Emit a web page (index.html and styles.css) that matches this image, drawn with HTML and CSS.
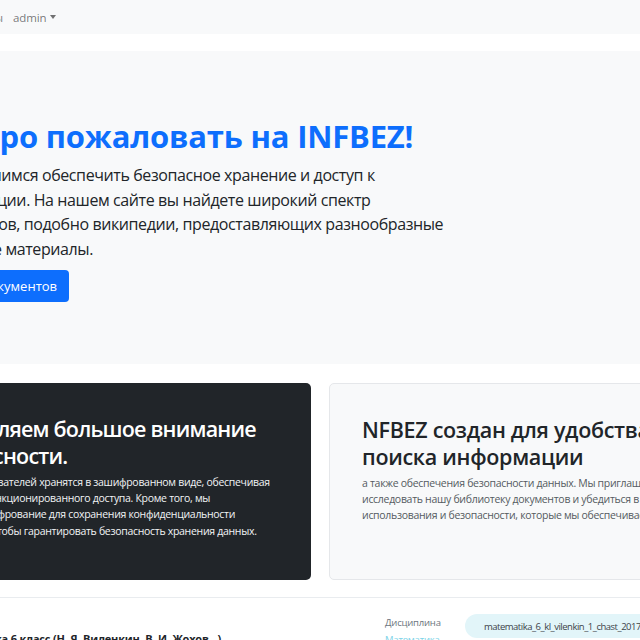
FILE: index.html
```html
<!DOCTYPE html>
<html lang="ru">
<head>
<meta charset="utf-8">
<title>INFBEZ</title>
<link rel="stylesheet" href="styles.css">
</head>
<body>
<nav class="navbar">
  <div class="nav-inner">
    <a class="nav-link" href="#">Документы</a>
    <a class="nav-link dropdown" href="#">admin <span class="caret"></span></a>
  </div>
</nav>
<main class="page">
  <section class="jumbotron">
    <h1 class="hero-title">Добро пожаловать на INFBEZ!</h1>
    <p class="lead">Мы стремимся обеспечить безопасное хранение и доступ к<br>информации. На нашем сайте вы найдете широкий спектр<br>документов, подобно википедии, предоставляющих разнообразные<br>полезные материалы.</p>
    <a class="btn-primary" href="#">База документов</a>
  </section>
  <section class="cards">
    <div class="card card-dark">
      <h2 class="card-title">Мы уделяем большое внимание безопасности.</h2>
      <p class="card-text">Данные пользователей хранятся в зашифрованном виде, обеспечивая<br>защиту от несанкционированного доступа. Кроме того, мы<br>используем шифрование для сохранения конфиденциальности<br>информации, чтобы гарантировать безопасность хранения данных.</p>
    </div>
    <div class="card card-light">
      <h2 class="card-title">NFBEZ создан для удобства поиска информации</h2>
      <p class="card-text">а также обеспечения безопасности данных. Мы приглашаем вас исследовать нашу библиотеку документов и убедиться в удобстве использования и безопасности, которые мы обеспечиваем.</p>
    </div>
  </section>
  <section class="doc">
    <div class="doc-title">Математика 6 класс (Н. Я. Виленкин, В. И. Жохов...)</div>
    <div class="doc-meta">
      <span class="meta-label">Дисциплина</span>
      <span class="meta-value">Математика</span>
    </div>
    <div class="doc-file">matematika_6_kl_vilenkin_1_chast_2017.pdf</div>
  </section>
</main>
</body>
</html>
```
FILE: styles.css
```css
* { box-sizing: border-box; }
html, body { margin: 0; padding: 0; }
body {
  font-family: "Open Sans", "Noto Sans", sans-serif;
  color: #212529;
  background: #fff;
  overflow: hidden;
  width: 640px;
  height: 640px;
}
a { text-decoration: none; }

.navbar {
  height: 34px;
  background: #f8f9fa;
  display: flex;
  align-items: center;
}
.nav-inner {
  display: flex;
  align-items: center;
  gap: 10px;
  margin-left: -59px;
}
.nav-link {
  font-size: 11.5px;
  letter-spacing: -0.1px;
  color: rgba(0, 0, 0, 0.55);
  display: flex;
  align-items: center;
  gap: 3px;
}
.caret {
  width: 0;
  height: 0;
  border-left: 3.5px solid transparent;
  border-right: 3.5px solid transparent;
  border-top: 4px solid rgba(0, 0, 0, 0.55);
}

.page {
  margin-left: -105px;
  width: 850px;
}

.jumbotron {
  margin-top: 17px;
  height: 313px;
  background: #f8f9fa;
  padding: 67px 0 0 43px;
}
.hero-title {
  margin: 0;
  font-size: 31px;
  line-height: 37px;
  font-weight: 700;
  color: #0d6efd;
  letter-spacing: -0.2px;
}
.lead {
  margin: 8px 0 9px -10px;
  width: 640px;
  font-size: 16px;
  line-height: 24.5px;
  letter-spacing: -0.4px;
  color: #212529;
}
.btn-primary {
  display: inline-flex;
  align-items: center;
  height: 32px;
  padding: 0 12px;
  background: #0d6efd;
  color: #fff;
  font-size: 13px;
  border-radius: 4px;
}

.cards {
  margin-top: 19px;
  display: grid;
  grid-template-columns: 416px 416px;
  gap: 18px;
}
.card {
  height: 197px;
  border-radius: 5px;
  padding: 32px 33px 0;
}
.card-dark {
  background: #212529;
  color: #f8f9fa;
  padding-left: 27px;
}
.card-light {
  background: #f8f9fa;
  border: 1px solid #e5e7ea;
  padding-left: 32px;
}
.card-title {
  margin: 0;
  font-size: 21.5px;
  line-height: 27px;
  font-weight: 600;
  letter-spacing: -0.3px;
}
.card-dark .card-title { color: #fff; width: 362px; letter-spacing: -0.8px; }
.card-light .card-title { color: #212529; width: 350px; }
.card-text {
  margin: 4.5px 0 0;
  font-size: 10.5px;
  line-height: 16.4px;
  letter-spacing: -0.3px;
}
.card-dark .card-text { color: #f1f3f5; width: 400px; white-space: nowrap; }
.card-light .card-text { color: #555b61; width: 350px; }

.doc {
  margin-top: 17px;
  border-top: 1px solid #e9ecef;
  display: flex;
  align-items: flex-start;
  padding: 16px 0 0 42px;
  height: 80px;
}
.doc-title {
  width: 448px;
  font-size: 11px;
  font-weight: 700;
  letter-spacing: -0.2px;
  padding-top: 17px;
  white-space: nowrap;
  color: #212529;
}
.doc-meta {
  width: 80px;
  display: flex;
  flex-direction: column;
  font-size: 9.5px;
  line-height: 17px;
  letter-spacing: -0.2px;
}
.meta-label { color: #6c757d; }
.meta-value { color: #7dd3e8; }
.doc-file {
  height: 24px;
  border-radius: 12px;
  background: #e2f5f9;
  color: #3d4349;
  font-size: 9.5px;
  letter-spacing: -0.5px;
  display: flex;
  align-items: center;
  padding: 0 19px;
  white-space: nowrap;
}
```
